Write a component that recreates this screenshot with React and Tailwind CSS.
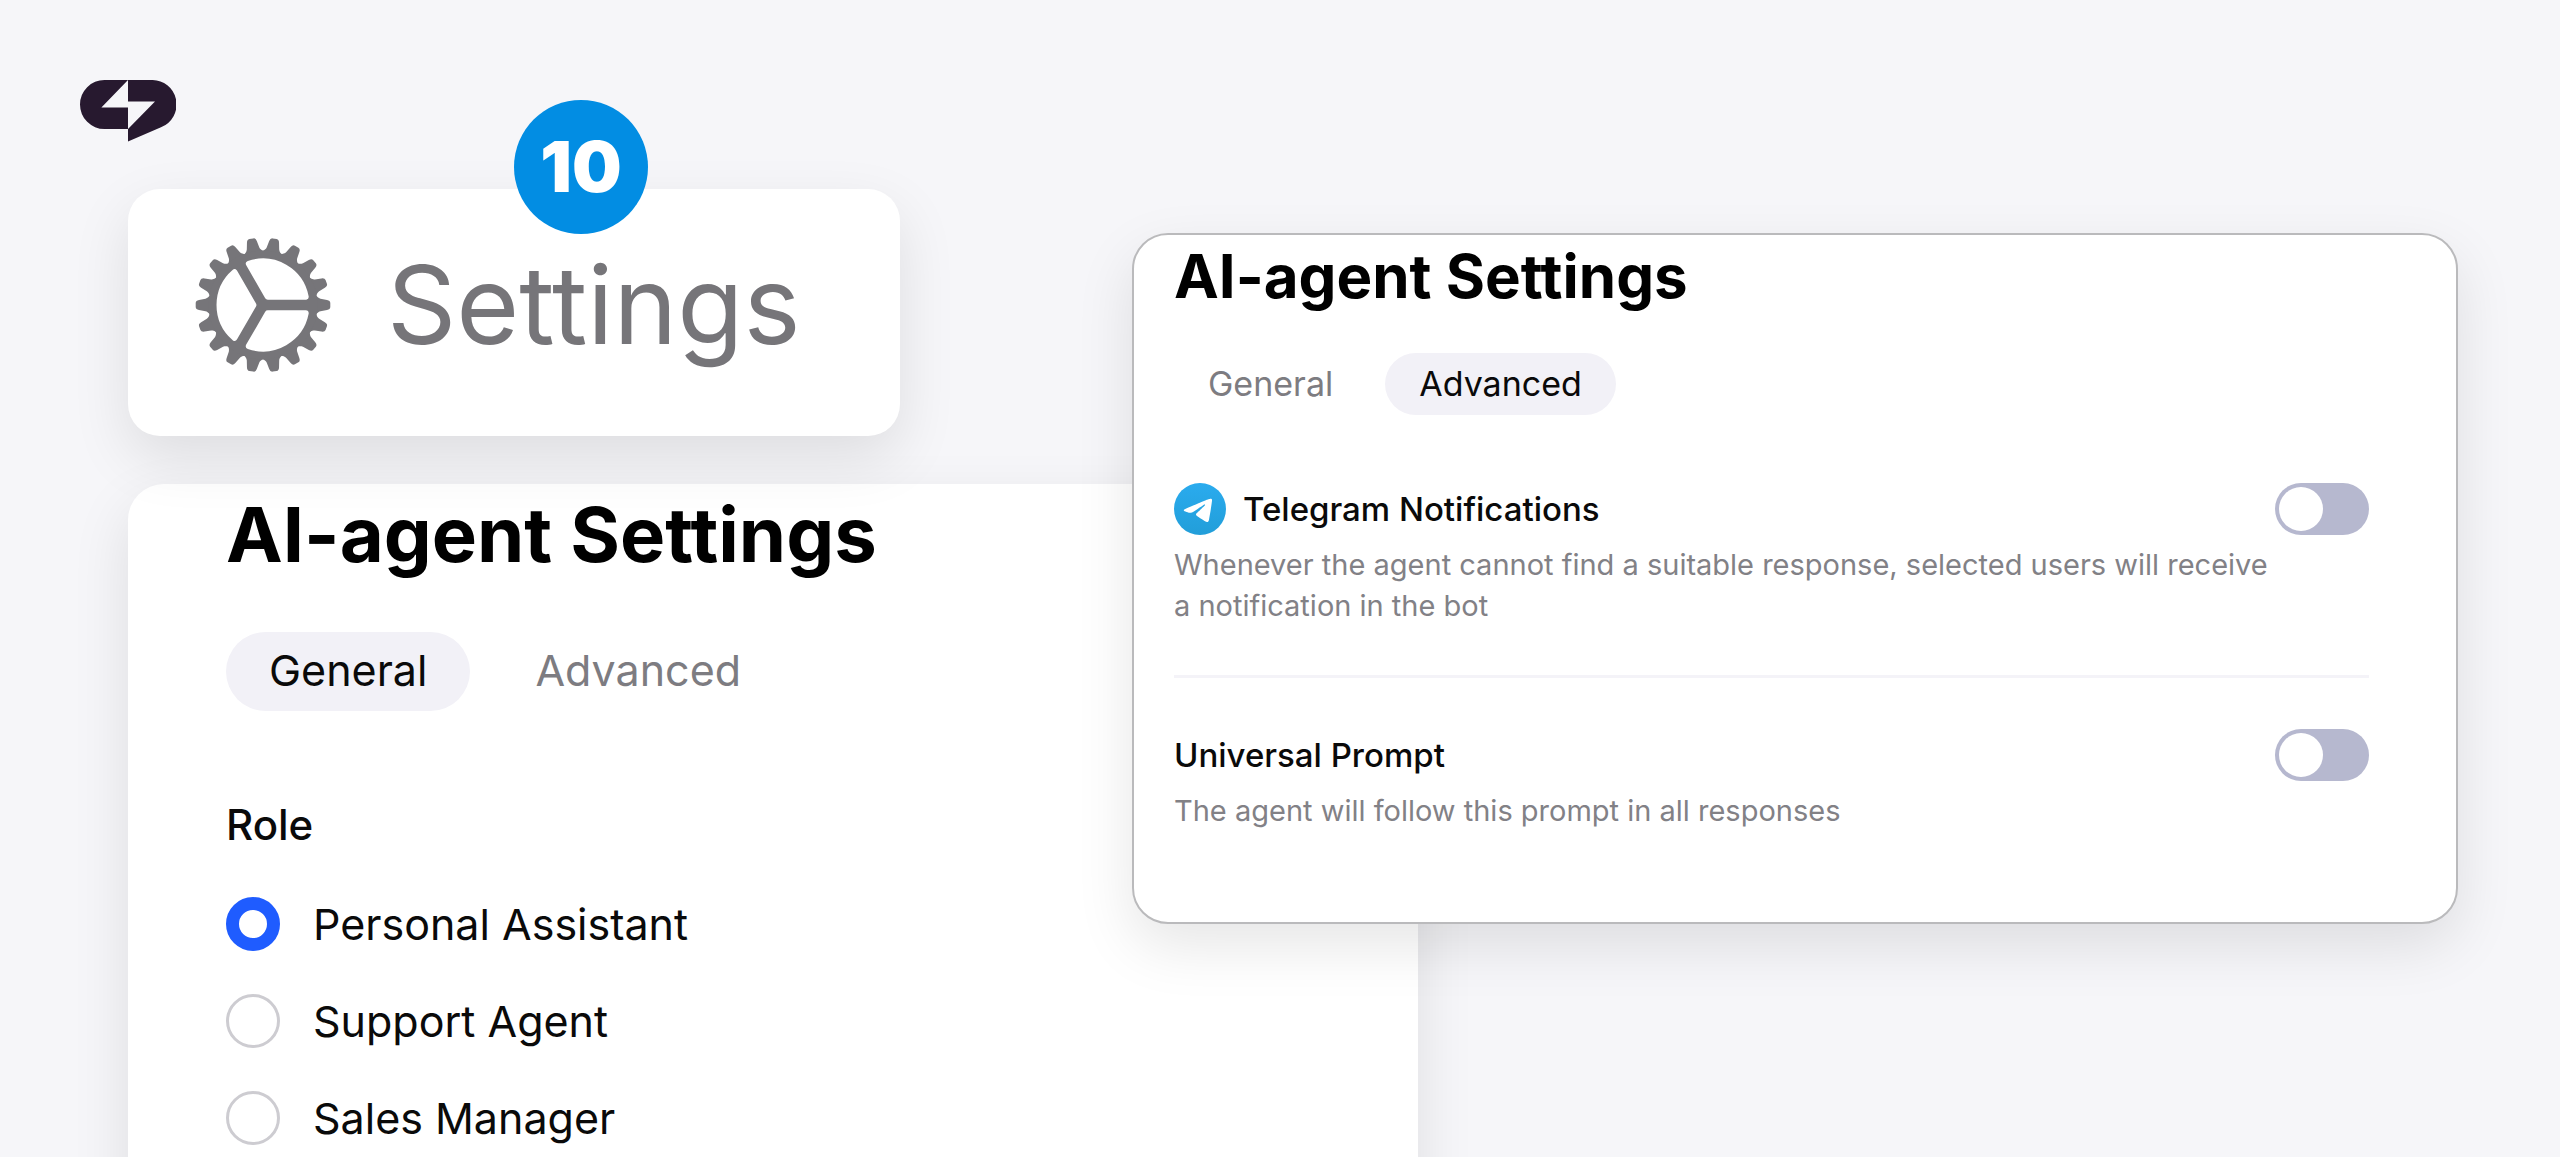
const SHADOW = "shadow-[0_22px_58px_rgba(0,0,0,0.1)]";

function Logo() {
  return (
    <svg viewBox="0 0 96 62" className="h-[62px] w-24" fill="#27192f" role="img" aria-label="Logo">
      <path d="M48 0H24.5a24.5 24.5 0 0 0 0 49H48V27.6H21.4Z" />
      <path d="M48 0H71.5A24.5 24.5 0 0 1 81 47.3L48 61.4V49L75 21.6H48Z" />
    </svg>
  );
}

function GearIcon() {
  const teeth = Array.from({ length: 18 }, (_, i) => i * 20);
  return (
    <svg viewBox="-68 -68 136 136" className="size-[136px] shrink-0" aria-hidden="true">
      <g fill="#767579">
        {teeth.map((a) => (
          <path
            key={a}
            transform={`rotate(${a})`}
            d="M50 -11.500C54 -9.500 54.500 -7 57.500 -6.300L64 -5Q67.300 -4.400 67.300 -2V2Q67.300 4.400 64 5L57.500 6.300C54.500 7 54 9.500 50 11.500Z"
          />
        ))}
        <circle r="54.5" />
      </g>
      <g fill="#fff" stroke="#fff" strokeWidth="6" strokeLinejoin="round">
        {[0, 120, 240].map((a) => (
          <path key={a} transform={`rotate(${a})`} d="M4.800 8.300H42.700A43.500 43.500 0 0 1 -14.200 41.100Z" />
        ))}
      </g>
    </svg>
  );
}

function TelegramIcon() {
  return (
    <svg viewBox="0 0 240 240" className="size-[52px] shrink-0" aria-hidden="true">
      <defs>
        <linearGradient id="tg" x1="0" y1="0" x2="0" y2="1">
          <stop offset="0" stopColor="#2aabee" />
          <stop offset="1" stopColor="#229ed9" />
        </linearGradient>
      </defs>
      <circle cx="120" cy="120" r="120" fill="url(#tg)" />
      <path
        fill="#fff"
        d="M54 118.700c35-15.200 58.300-25.300 70-30.100 33.300-13.900 40.300-16.300 44.800-16.400 1 0 3.200.2 4.700 1.400 1.200 1 1.500 2.300 1.700 3.300s.4 3.100.2 4.700c-1.800 19-9.600 65.100-13.600 86.300-1.700 9-5 12-8.200 12.300-7 .6-12.300-4.600-19-9-10.600-6.900-16.500-11.200-26.800-18-11.900-7.800-4.200-12.100 2.600-19.100 1.800-1.800 32.500-29.800 33.100-32.300.1-.3.100-1.500-.6-2.100-.7-.6-1.700-.4-2.500-.2-1.100.2-17.900 11.400-50.600 33.500-4.800 3.300-9.100 4.900-13 4.800-4.300-.1-12.500-2.400-18.700-4.400-7.500-2.400-13.500-3.700-13-7.900.3-2.200 3.300-4.400 8.900-6.800Z"
      />
    </svg>
  );
}

function Tabs({ active, large }) {
  const size = large
    ? "h-[79px] px-[43px] pb-[2px] text-[43px]"
    : "h-[62px] px-[34px] text-[34px]";
  return (
    <div role="tablist" className={large ? "flex gap-[22px]" : "flex gap-[18px]"}>
      {["General", "Advanced"].map((name) => (
        <button
          key={name}
          type="button"
          role="tab"
          aria-selected={name === active}
          className={`${size} rounded-full leading-none ${
            name === active ? "bg-[#f2f1f7] text-[#0a0a0a]" : "text-[#7d7c81]"
          }`}
        >
          {name}
        </button>
      ))}
    </div>
  );
}

function Role({ name, checked }) {
  return (
    <label className="flex items-center gap-[33px] text-[43px] leading-[54px] text-[#0a0a0a]">
      <input
        type="radio"
        name="role"
        defaultChecked={checked}
        className="size-[54px] shrink-0 appearance-none rounded-full border-3 border-[#cdccd1] bg-white checked:border-[13px] checked:border-[#1f5cff]"
      />
      {name}
    </label>
  );
}

function Option({ id, icon, title, children }) {
  return (
    <div>
      <div className="flex h-[52px] items-center justify-between">
        <label htmlFor={id} className="flex items-center gap-[17px] text-[33px] font-medium leading-[52px] text-[#0a0a0a]">
          {icon}
          {title}
        </label>
        <input
          id={id}
          type="checkbox"
          role="switch"
          className="h-[52px] w-[94px] shrink-0 appearance-none rounded-full bg-[#b6b8cf] before:m-[4px] before:block before:size-[44px] before:rounded-full before:bg-white"
        />
      </div>
      <p className="mt-[9px] max-w-[1110px] text-[29px] leading-[41px] text-[#828186]">{children}</p>
    </div>
  );
}

export default function App() {
  return (
    <div className="h-screen overflow-hidden bg-[#f6f6f9] font-['Inter',sans-serif]">
      <header className="h-[189px] px-20 pt-20">
        <Logo />
      </header>
      <main className="flex items-start pl-32 pr-[102px]">
        <div className="flex min-w-0 flex-[1290] flex-col gap-12">
          <button
            type="button"
            className={`relative flex h-[247px] w-[772px] items-center gap-[56px] rounded-[32px] bg-white pb-[15px] pl-[67px] text-left text-[#767579] ${SHADOW}`}
          >
            <GearIcon />
            <span className="text-[108px] leading-none">Settings</span>
            <span className="absolute -top-[89px] left-[386px] flex size-[134px] items-center justify-center rounded-full bg-[#028de3] text-[70px] font-black leading-none text-white">
              10
            </span>
          </button>
          <section className={`h-[760px] rounded-t-[36px] bg-white pl-[98px] pt-[4px] ${SHADOW}`}>
            <h1 className="text-[76px] font-bold leading-[92px] text-black">AI-agent Settings</h1>
            <div className="mt-[52px]">
              <Tabs active="General" large />
            </div>
            <fieldset className="mt-[87px]">
              <legend className="text-[42px] font-medium leading-[54px] text-[#0a0a0a]">Role</legend>
              <div className="mt-[45px] flex flex-col gap-[43px]">
                <Role name="Personal Assistant" checked />
                <Role name="Support Agent" />
                <Role name="Sales Manager" />
              </div>
            </fieldset>
          </section>
        </div>
        <div className="relative -ml-[286px] mt-[44px] min-w-0 flex-[1326]">
          <section
            className={`rounded-[36px] border-2 border-[#bababc] bg-white pb-[91px] pl-[40px] pr-[87px] pt-[4px] ${SHADOW}`}
          >
            <h2 className="text-[60px] font-bold leading-[74px] text-black">AI-agent Settings</h2>
            <div className="mt-[40px]">
              <Tabs active="Advanced" />
            </div>
            <div className="mt-[68px]">
              <Option id="telegram" icon={<TelegramIcon />} title="Telegram Notifications">
                Whenever the agent cannot find a suitable response, selected users will receive a notification in the bot
              </Option>
            </div>
            <hr className="mb-[51px] mt-[49px] border-t-3 border-[#f4f3f8]" />
            <Option id="prompt" title="Universal Prompt">
              The agent will follow this prompt in all responses
            </Option>
          </section>
        </div>
      </main>
    </div>
  );
}
